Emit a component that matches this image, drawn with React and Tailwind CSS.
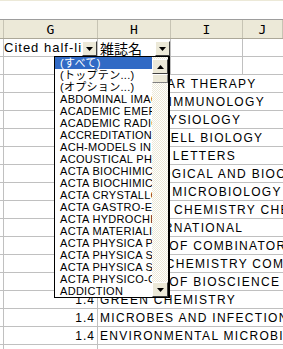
import React from "react";

const cols = ["", "G", "H", "I", "J"];

const rows = [
  { v: "1.4", name: "RNA" },
  { v: "1.4", name: "MOLECULAR THERAPY" },
  { v: "1.4", name: "CLINICAL IMMUNOLOGY" },
  { v: "1.4", name: "PLANT PHYSIOLOGY" },
  { v: "1.4", name: "NATURE CELL BIOLOGY" },
  { v: "1.4", name: "ECOLOGY LETTERS" },
  { v: "1.4", name: "PHYSIOLOGICAL AND BIOCHEMICAL ZOOLOGY" },
  { v: "1.4", name: "CURRENT MICROBIOLOGY" },
  { v: "1.4", name: "PHYSICAL CHEMISTRY CHEMICAL PHYSICS" },
  { v: "1.4", name: "BJU INTERNATIONAL" },
  { v: "1.4", name: "JOURNAL OF COMBINATORIAL CHEMISTRY" },
  { v: "1.4", name: "ELECTROCHEMISTRY COMMUNICATIONS" },
  { v: "1.4", name: "JOURNAL OF BIOSCIENCE AND BIOENGINEERING" },
  { v: "1.4", name: "GREEN CHEMISTRY" },
  { v: "1.4", name: "MICROBES AND INFECTION" },
  { v: "1.4", name: "ENVIRONMENTAL MICROBIOLOGY" },
  { v: "1.4", name: "EUROPEAN JOURNAL OF MEDICINAL CHEMISTRY" },
];

const items = [
  "(すべて)",
  "(トップテン...)",
  "(オプション...)",
  "ABDOMINAL IMAGING",
  "ACADEMIC EMERGENCY MEDICINE",
  "ACADEMIC RADIOLOGY",
  "ACCREDITATION AND QUALITY ASSURANCE",
  "ACH-MODELS IN CHEMISTRY",
  "ACOUSTICAL PHYSICS",
  "ACTA BIOCHIMICA ET BIOPHYSICA SINICA",
  "ACTA BIOCHIMICA POLONICA",
  "ACTA CRYSTALLOGRAPHICA SECTION A",
  "ACTA GASTRO-ENTEROLOGICA BELGICA",
  "ACTA HYDROCHIMICA ET HYDROBIOLOGICA",
  "ACTA MATERIALIA",
  "ACTA PHYSICA POLONICA A",
  "ACTA PHYSICA SINICA",
  "ACTA PHYSICA SLOVACA",
  "ACTA PHYSICO-CHIMICA SINICA",
  "ADDICTION",
];

const Arrow = ({ up }) => (
  <svg width="7" height="4" viewBox="0 0 7 4" className="block">
    <polygon points={up ? "3.5,0 7,4 0,4" : "0,0 7,0 3.5,4"} fill="#000" />
  </svg>
);

// autofilter button in the cell
const FilterBtn = () => (
  <div className="w-[15px] h-[15px] shrink-0 flex items-center justify-center bg-[#ECE9D8] border-t border-l border-white border-r border-b border-r-[#404040] border-b-[#404040]">
    <Arrow />
  </div>
);

const ScrollBtn = ({ up }) => (
  <div className="h-[15px] shrink-0 flex items-center justify-center bg-[#ECE9D8] border-t border-l border-white border-r border-b border-r-[#404040] border-b-[#404040]">
    <Arrow up={up} />
  </div>
);

export default function App() {
  return (
    <div className="relative w-[283px] h-[349px] overflow-hidden bg-white text-black font-['Liberation_Sans',sans-serif]">
      <div className="h-[19px] border-t border-[#ECE9D8]" />

      {/* column header */}
      <div className="grid grid-cols-[4px_94px_73px_72px_1fr] h-[20px] border-t border-b border-t-[#9D9D9D] border-b-[#ACA899] bg-[#ECE9D8]">
        {cols.map((c, i) => (
          <div
            key={i}
            className="border-r border-[#C7C4B4] flex items-center justify-center text-[13px] leading-none font-['DejaVu_Sans_Mono',monospace]"
          >
            {c}
          </div>
        ))}
      </div>

      {/* field names row */}
      <div className="grid grid-cols-[4px_94px_73px_72px_1fr] h-[18px] border-b border-[#C0C0C0]">
        <div className="border-r border-[#C0C0C0]" />
        <div className="border-r border-[#C0C0C0] flex items-end overflow-hidden">
          <span className="flex-1 overflow-hidden whitespace-nowrap text-[13px] leading-[16px] tracking-[1px] self-center">
            Cited half-life
          </span>
          <FilterBtn />
        </div>
        <div className="border-r border-[#C0C0C0] flex items-end overflow-hidden">
          <span className="flex-1 overflow-hidden whitespace-nowrap pl-[2px] text-[14px] leading-[16px] self-center font-['Noto_Sans_CJK_JP',sans-serif]">
            雑誌名
          </span>
          <FilterBtn />
        </div>
        <div className="border-r border-[#C0C0C0]" />
        <div />
      </div>

      {/* data rows */}
      {rows.map((r, i) => (
        <div
          key={i}
          className="grid grid-cols-[4px_94px_73px_72px_1fr] h-[18px] border-b border-[#C0C0C0] text-[12px] tracking-[1.3px]"
        >
          <div className="border-r border-[#C0C0C0]" />
          <div className="border-r border-[#C0C0C0] flex items-center justify-end pr-[2px] tracking-[1px]">
            {r.v}
          </div>
          {i === 0 ? (
            <>
              <div className="border-r border-[#C0C0C0] flex items-center pl-[2px]">{r.name}</div>
              <div className="border-r border-[#C0C0C0]" />
              <div />
            </>
          ) : (
            <div className="col-span-3 flex items-center pl-[2px] whitespace-nowrap overflow-hidden">
              {r.name}
            </div>
          )}
        </div>
      ))}

      {/* autofilter dropdown list */}
      <div className="absolute left-[54px] top-[56px] w-[116px] h-[242px] bg-white border border-black border-r-2 flex">
        <div className="flex-1 flex flex-col overflow-hidden">
          {items.map((t, i) => (
            <div
              key={i}
              className={
                "h-[12px] shrink-0 pl-[5px] text-[11px] leading-[12px] tracking-[0.3px] whitespace-nowrap overflow-hidden font-['Liberation_Sans','Noto_Sans_CJK_JP',sans-serif] " +
                (i === 0 ? "bg-[#316AC5] text-white" : "")
              }
            >
              {t}
            </div>
          ))}
        </div>
        <div className="w-[16px] flex flex-col pt-[2px] bg-[image:repeating-conic-gradient(#ECE9D8_0%_25%,#ffffff_0%_50%)] bg-[length:2px_2px]">
          <ScrollBtn up />
          <div className="h-[9px] shrink-0 bg-[#ECE9D8] border-t border-l border-white border-r border-b border-r-[#808080] border-b-[#808080]" />
          <div className="flex-1" />
          <ScrollBtn />
        </div>
      </div>
    </div>
  );
}
